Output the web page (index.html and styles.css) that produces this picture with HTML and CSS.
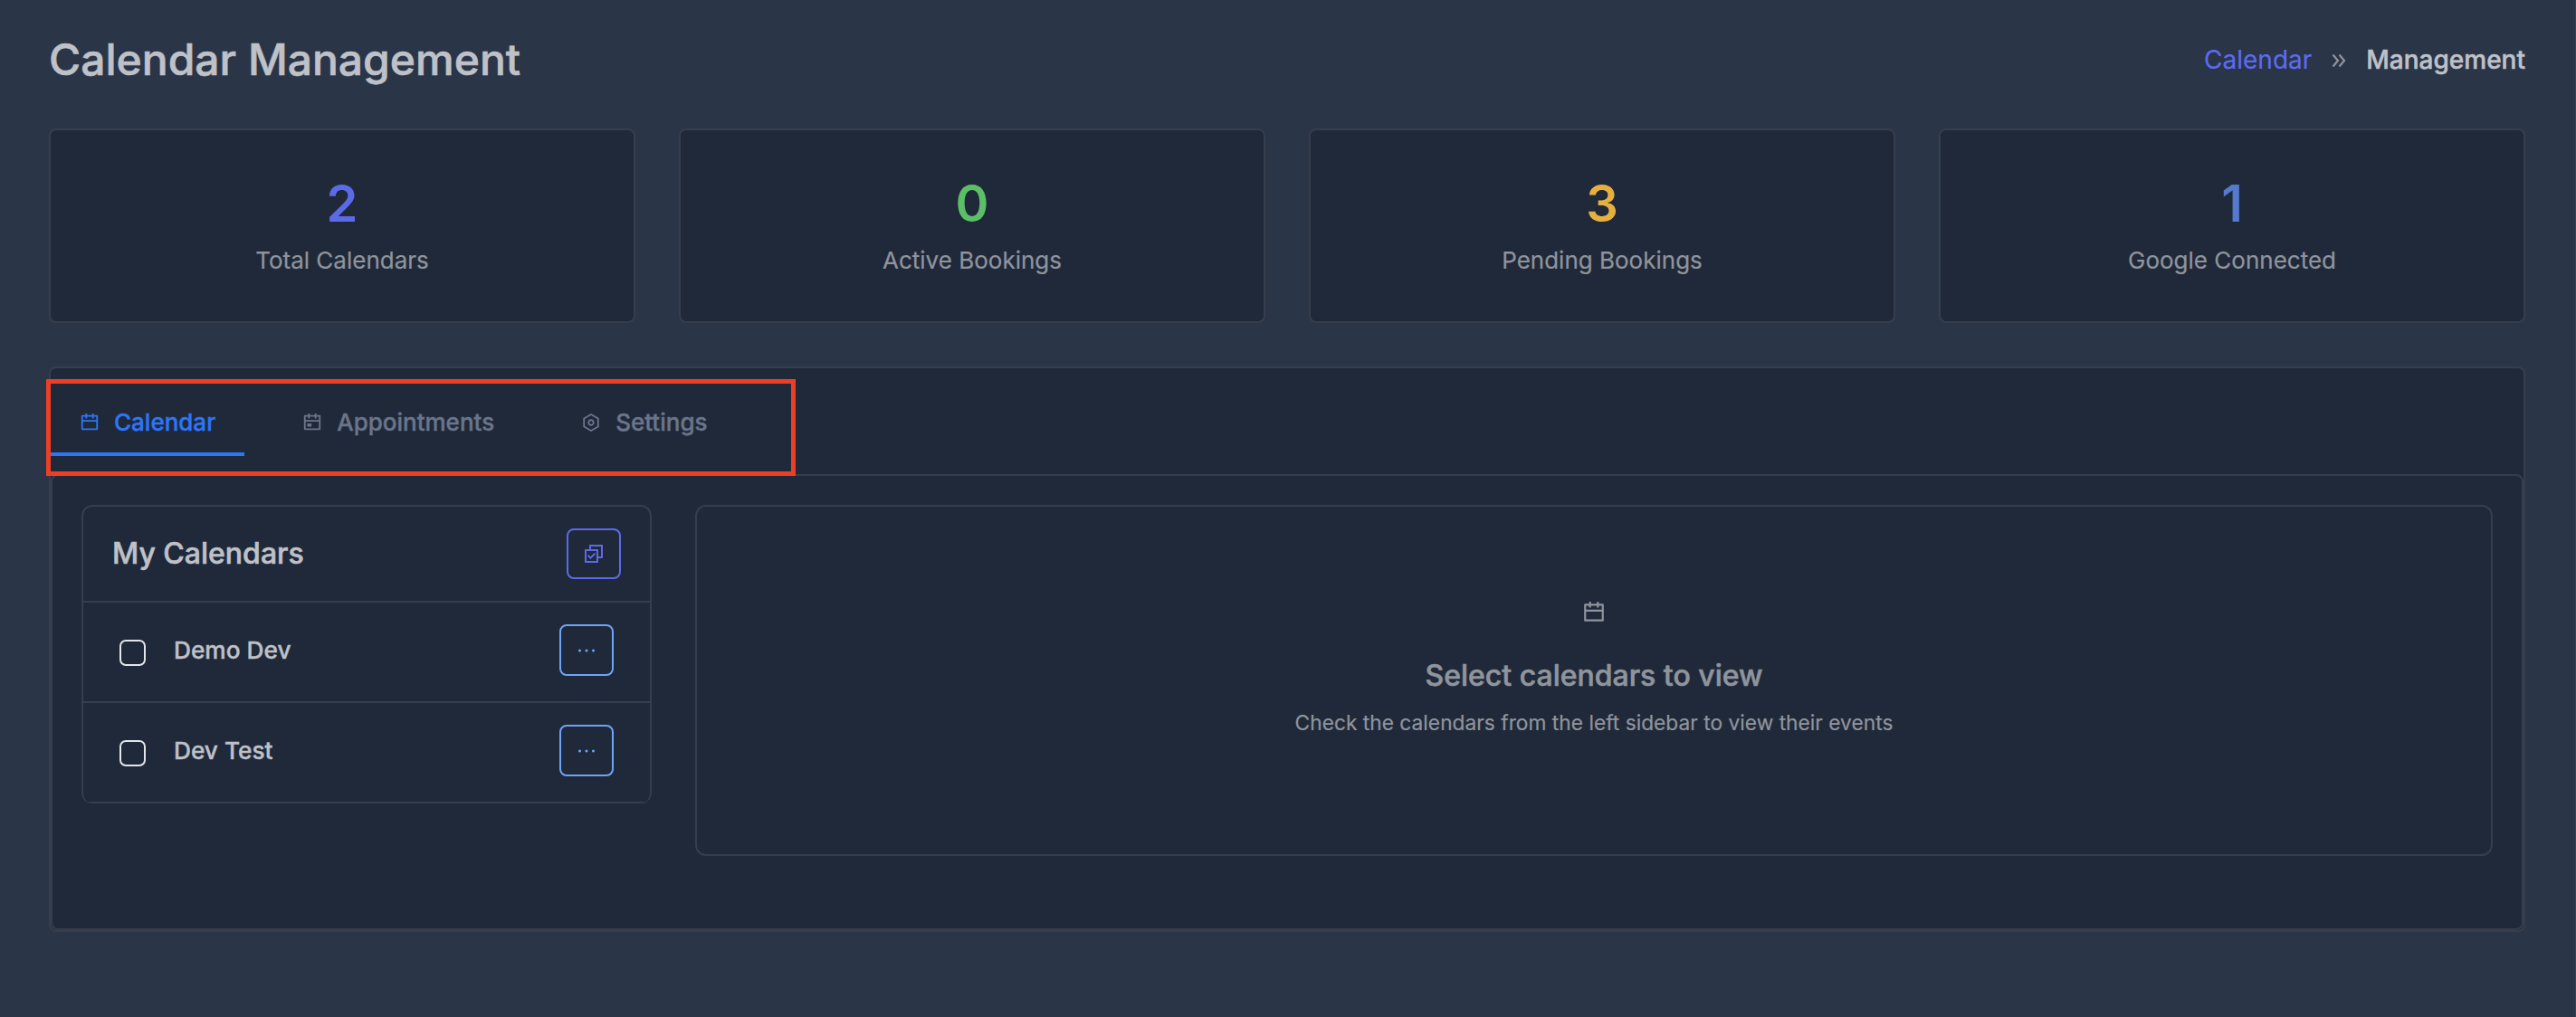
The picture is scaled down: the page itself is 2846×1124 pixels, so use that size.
FILE: index.html
```
<!DOCTYPE html>
<html lang="en">
<head>
<meta charset="utf-8">
<title>Calendar Management</title>
<link rel="stylesheet" href="styles.css">
</head>
<body>
<svg class="sprite" aria-hidden="true">
  <symbol id="i-calendar" viewBox="0 0 24 24"><path d="M9 1V3H15V1H17V3H21C21.5523 3 22 3.44772 22 4V20C22 20.5523 21.5523 21 21 21H3C2.44772 21 2 20.5523 2 20V4C2 3.44772 2.44772 3 3 3H7V1H9ZM20 11H4V19H20V11ZM7 5H4V9H20V5H17V7H15V5H9V7H7V5Z"/></symbol>
  <symbol id="i-event" viewBox="0 0 24 24"><path d="M9 1V3H15V1H17V3H21C21.5523 3 22 3.44772 22 4V20C22 20.5523 21.5523 21 21 21H3C2.44772 21 2 20.5523 2 20V4C2 3.44772 2.44772 3 3 3H7V1H9ZM20 11H4V19H20V11ZM7 5H4V9H20V5H17V7H15V5H9V7H7V5ZM6 13H11V17H6V13Z"/></symbol>
  <symbol id="i-settings" viewBox="0 0 24 24"><path d="M12 1L21.5 6.5V17.5L12 23L2.5 17.5V6.5L12 1ZM12 3.311L4.5 7.65311V16.3469L12 20.689L19.5 16.3469V7.65311L12 3.311ZM12 16C9.79086 16 8 14.2091 8 12C8 9.79086 9.79086 8 12 8C14.2091 8 16 9.79086 16 12C16 14.2091 14.2091 16 12 16ZM12 14C13.1046 14 14 13.1046 14 12C14 10.8954 13.1046 10 12 10C10.8954 10 10 10.8954 10 12C10 13.1046 10.8954 14 12 14Z"/></symbol>
  <symbol id="i-select-all" viewBox="0 0 24 24"><path d="M7 7V3C7 2.448 7.448 2 8 2H21C21.552 2 22 2.448 22 3V16C22 16.552 21.552 17 21 17H17V20.999C17 21.552 16.55 22 15.993 22H3.007C2.451 22 2 21.555 2 20.999L2.003 8.001C2.003 7.448 2.453 7 3.01 7H7ZM9 7H15.993C16.549 7 17 7.445 17 8.001V15H20V4H9V7ZM4.002 9L4 20H15V9H4.002ZM8.503 18L4.967 14.464L6.381 13.05L8.503 15.172L12.745 10.929L14.16 12.343L8.503 18Z"/></symbol>
  <symbol id="i-more" viewBox="0 0 24 24"><circle cx="4.5" cy="12" r="1.5"/><circle cx="12" cy="12" r="1.5"/><circle cx="19.5" cy="12" r="1.5"/></symbol>
</svg>

<div class="page">
  <header class="page-header">
    <h1 class="page-title">Calendar Management</h1>
    <nav class="breadcrumb">
      <a class="breadcrumb-link">Calendar</a>
      <svg class="breadcrumb-sep" viewBox="0 0 16 16"><path d="M1.5 1.5L7 8L1.5 14.5M8.5 1.5L14 8L8.5 14.5"/></svg>
      <span class="breadcrumb-current">Management</span>
    </nav>
  </header>

  <section class="stats">
    <div class="stat"><div class="stat-value primary">2</div><div class="stat-label">Total Calendars</div></div>
    <div class="stat"><div class="stat-value success">0</div><div class="stat-label">Active Bookings</div></div>
    <div class="stat"><div class="stat-value warning">3</div><div class="stat-label">Pending Bookings</div></div>
    <div class="stat"><div class="stat-value info">1</div><div class="stat-label">Google Connected</div></div>
  </section>

  <main class="panel">
    <div class="tabs">
      <a class="tab active"><svg class="icon"><use href="#i-calendar"/></svg>Calendar</a>
      <a class="tab"><svg class="icon"><use href="#i-event"/></svg>Appointments</a>
      <a class="tab"><svg class="icon"><use href="#i-settings"/></svg>Settings</a>
    </div>
    <div class="highlight"></div>
    <div class="tab-content">
      <aside class="calendars">
        <div class="calendars-header">
          <h2 class="calendars-title">My Calendars</h2>
          <button class="btn btn-primary"><svg class="btn-icon"><use href="#i-select-all"/></svg></button>
        </div>
        <div class="calendar-row">
          <span class="checkbox"></span>
          <span class="calendar-name">Demo Dev</span>
          <button class="btn btn-info"><svg class="btn-icon"><use href="#i-more"/></svg></button>
        </div>
        <div class="calendar-row">
          <span class="checkbox"></span>
          <span class="calendar-name">Dev Test</span>
          <button class="btn btn-info"><svg class="btn-icon"><use href="#i-more"/></svg></button>
        </div>
      </aside>
      <section class="empty">
        <svg class="empty-icon"><use href="#i-calendar"/></svg>
        <h3 class="empty-title">Select calendars to view</h3>
        <p class="empty-text">Check the calendars from the left sidebar to view their events</p>
      </section>
    </div>
  </main>
</div>
</body>
</html>
```
FILE: styles.css
```
* { box-sizing: border-box; }
body {
  margin: 0;
  background: #2a3547;
  color: #bfc1c8;
  font: 400 26px/40px Inter, sans-serif;
}
h1, h2, h3, p { margin: 0; font-weight: 500; }
h1, h2, h3 { -webkit-text-stroke: 0.6px; }
svg { display: block; fill: currentColor; }
.sprite { position: absolute; width: 0; height: 0; }

.page {
  min-height: 1124px;
  padding: 36px 55px 0 54px;
  border-right: 1px solid #3b4455;
}
.page-header {
  display: flex;
  align-items: center;
  justify-content: space-between;
  height: 60px;
}
.page-title { font-size: 48px; line-height: 60px; }
.breadcrumb { display: flex; align-items: center; font-size: 28px; }
.breadcrumb-link { color: #5d6bee; -webkit-text-stroke: 0.2px; }
.breadcrumb-sep {
  width: 16px;
  height: 16px;
  margin: 1px 22px 0 22px;
  fill: none;
  stroke: #8f949e;
  stroke-width: 2.2;
}
.breadcrumb-current { font-weight: 500; -webkit-text-stroke: 0.5px; }

.stats {
  display: grid;
  grid-template-columns: repeat(4, 1fr);
  gap: 48px;
  margin-top: 46px;
}
.stat {
  height: 215px;
  padding-top: 46px;
  border: 2px solid #363e4e;
  border-radius: 8px;
  background: #202939;
  text-align: center;
}
.stat-value { font-size: 56px; font-weight: 600; line-height: 70px; }
.stat-label { margin-top: 8px; color: #8f949d; -webkit-text-stroke: 0.2px; }
.primary { color: #5b6be8; }
.success { color: #5cbf67; }
.warning { color: #e6b040; }
.info { color: #5579cd; }

.panel {
  position: relative;
  height: 625px;
  margin-top: 48px;
  border: 2px solid #363e4e;
  border-radius: 8px;
  background: #202939;
}
.tabs { display: flex; gap: 32px; height: 117px; padding: 22px 0 20px; }
.tab {
  display: flex;
  align-items: center;
  gap: 16px;
  padding: 0 32px;
  border-top: 4px solid transparent;
  border-bottom: 4px solid transparent;
  color: #6a758b;
  font-weight: 500;
  -webkit-text-stroke: 0.4px;
}
.tab.active { border-bottom-color: #2d76f6; color: #2d76f6; }
.icon { width: 22px; height: 22px; }
.highlight {
  position: absolute;
  top: 12px;
  left: -5px;
  width: 828px;
  height: 107px;
  border: 5px solid #ee3e26;
}
.tab-content {
  display: flex;
  gap: 48px;
  align-items: flex-start;
  height: 504px;
  padding: 32px;
  border: 2px solid #363e4e;
  border-radius: 8px;
}

.calendars {
  width: 630px;
  border: 2px solid #363e4e;
  border-bottom: 0;
  border-radius: 12px;
  overflow: hidden;
}
.calendars-header {
  display: flex;
  align-items: center;
  justify-content: space-between;
  height: 106px;
  padding: 0 32px;
  border-bottom: 2px solid #363e4e;
}
.calendars-title { padding-bottom: 1px; font-size: 32px; }
.btn {
  display: flex;
  align-items: center;
  justify-content: center;
  width: 60px;
  height: 57px;
  padding: 0;
  border: 2px solid;
  border-radius: 8px;
  background: none;
}
.btn-icon { width: 24px; height: 24px; }
.btn-primary { height: 56px; color: #5b6be8; }
.btn-info { margin-left: auto; color: #6ea4f8; }
.calendar-row {
  display: flex;
  align-items: center;
  height: 111px;
  padding: 0 40px 4px;
  border-bottom: 2px solid #363e4e;
}
.checkbox {
  width: 29px;
  height: 29px;
  margin-top: 6px;
  border: 2px solid #e2e6ea;
  border-radius: 7px;
}
.calendar-name {
  margin-left: 31px;
  font-size: 26.25px;
  font-weight: 500;
  -webkit-text-stroke: 0.4px;
}

.empty {
  display: flex;
  flex: 1;
  flex-direction: column;
  align-items: center;
  height: 388px;
  padding-top: 104px;
  border: 2px solid #363e4e;
  border-radius: 12px;
  color: #8f949d;
}
.empty-icon { width: 26px; height: 26px; }
.empty-title { margin-top: 37px; font-size: 32px; }
.empty-text {
  margin-top: 12px;
  font-size: 22.75px;
  font-weight: 400;
  -webkit-text-stroke: 0.2px;
}
```
